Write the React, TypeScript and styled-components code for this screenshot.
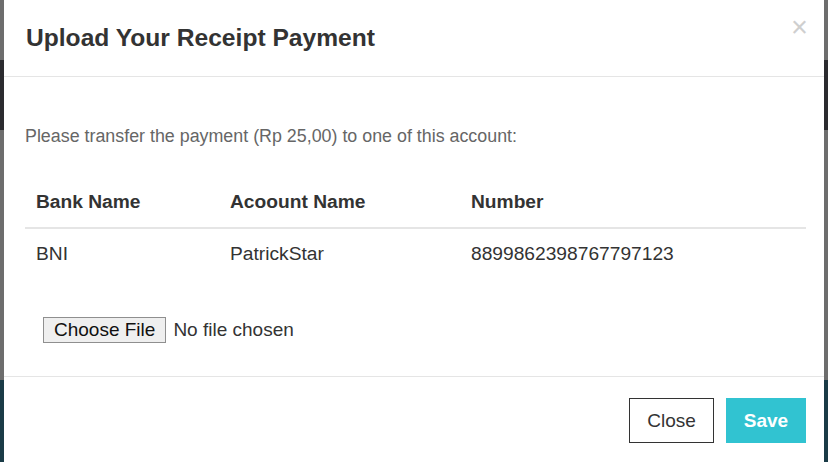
import * as React from 'react';
import styled, { createGlobalStyle } from 'styled-components';

const GlobalStyle = createGlobalStyle`
    html, body {
        margin: 0;
        padding: 0;
        height: 100%;
        overflow: hidden;
    }

    body {
        font-family: "Liberation Sans", Arial, sans-serif;
        background: linear-gradient(
            to bottom,
            #6d6d6d 0,
            #6d6d6d 60px,
            #2b2b2f 60px,
            #2b2b2f 130px,
            #6d6d6d 130px,
            #6d6d6d 380px,
            #1a3b47 380px
        );
    }
`;

const Dialog = styled.div`
    margin-left: 4px;
    width: 820px;
    height: 462px;
    background: #fff;
    display: flex;
    flex-direction: column;
    color: #333;
`;

const Header = styled.div`
    height: 76px;
    display: flex;
    align-items: center;
    justify-content: space-between;
    padding: 0 16px 0 22px;
    border-bottom: 1px solid #e5e5e5;
`;

const Title = styled.h4`
    margin: 0;
    font-size: 24.6px;
    font-weight: bold;
    line-height: 28px;
`;

const CloseX = styled.button`
    align-self: flex-start;
    margin-top: 13px;
    border: 0;
    background: transparent;
    padding: 0;
    color: #cfcfcf;
    font-family: "Liberation Sans", Arial, sans-serif;
    font-size: 29px;
    line-height: 28px;
    cursor: pointer;
`;

const Body = styled.div`
    padding: 0 18px 0 21px;
`;

const Intro = styled.p`
    margin: 47px 0 29px;
    font-size: 17.85px;
    line-height: 24px;
    color: #666;
`;

const Table = styled.table`
    width: 100%;
    border-collapse: collapse;
    font-size: 19.2px;
    color: #333;
`;

const HeadCell = styled.th<{ $width?: number }>`
    text-align: left;
    font-weight: bold;
    padding: 12px 11px;
    line-height: 26px;
    border-bottom: 2px solid #e5e5e5;
    width: ${p => (p.$width ? `${p.$width}px` : 'auto')};
`;

const Cell = styled.td`
    padding: 12px 11px;
    line-height: 26px;
`;

const FileRow = styled.div`
    margin-top: 38px;
    padding-left: 18px;
`;

const FileInput = styled.input`
    font-family: "Liberation Sans", Arial, sans-serif;
    font-size: 19px;
    color: #333;

    &::file-selector-button {
        font-family: "Liberation Sans", Arial, sans-serif;
        font-size: 19px;
        color: #111;
        height: 26px;
        padding: 0 10px;
        margin-right: 7px;
        background: #efefef;
        border: 1px solid #8f8f8f;
        border-radius: 0;
    }
`;

const Footer = styled.div`
    margin-top: auto;
    height: 86px;
    border-top: 1px solid #e5e5e5;
    display: flex;
    justify-content: flex-end;
    align-items: flex-start;
    gap: 12px;
    padding: 21px 18px 0 0;
    box-sizing: border-box;
`;

const Button = styled.button<{ $primary?: boolean }>`
    height: 45px;
    min-width: ${p => (p.$primary ? '80px' : '85px')};
    padding: 0 16px;
    font-family: "Liberation Sans", Arial, sans-serif;
    font-size: 19px;
    font-weight: ${p => (p.$primary ? 'bold' : 'normal')};
    cursor: pointer;
    border: 1px solid ${p => (p.$primary ? '#31c3d1' : '#333')};
    background: ${p => (p.$primary ? '#31c3d1' : '#fff')};
    color: ${p => (p.$primary ? '#fff' : '#333')};
`;

const accounts = [
    { bank: 'BNI', name: 'PatrickStar', number: '8899862398767797123' }
];

export default function App() {
    return (
        <>
            <GlobalStyle />
            <Dialog>
                <Header>
                    <Title>Upload Your Receipt Payment</Title>
                    <CloseX aria-label="Close">×</CloseX>
                </Header>
                <Body>
                    <Intro>Please transfer the payment (Rp 25,00) to one of this account:</Intro>
                    <Table>
                        <thead>
                            <tr>
                                <HeadCell $width={172}>Bank Name</HeadCell>
                                <HeadCell $width={219}>Acoount Name</HeadCell>
                                <HeadCell>Number</HeadCell>
                            </tr>
                        </thead>
                        <tbody>
                            {accounts.map(a => (
                                <tr key={a.number}>
                                    <Cell>{a.bank}</Cell>
                                    <Cell>{a.name}</Cell>
                                    <Cell>{a.number}</Cell>
                                </tr>
                            ))}
                        </tbody>
                    </Table>
                    <FileRow>
                        <FileInput type="file" />
                    </FileRow>
                </Body>
                <Footer>
                    <Button>Close</Button>
                    <Button $primary>Save</Button>
                </Footer>
            </Dialog>
        </>
    );
}
